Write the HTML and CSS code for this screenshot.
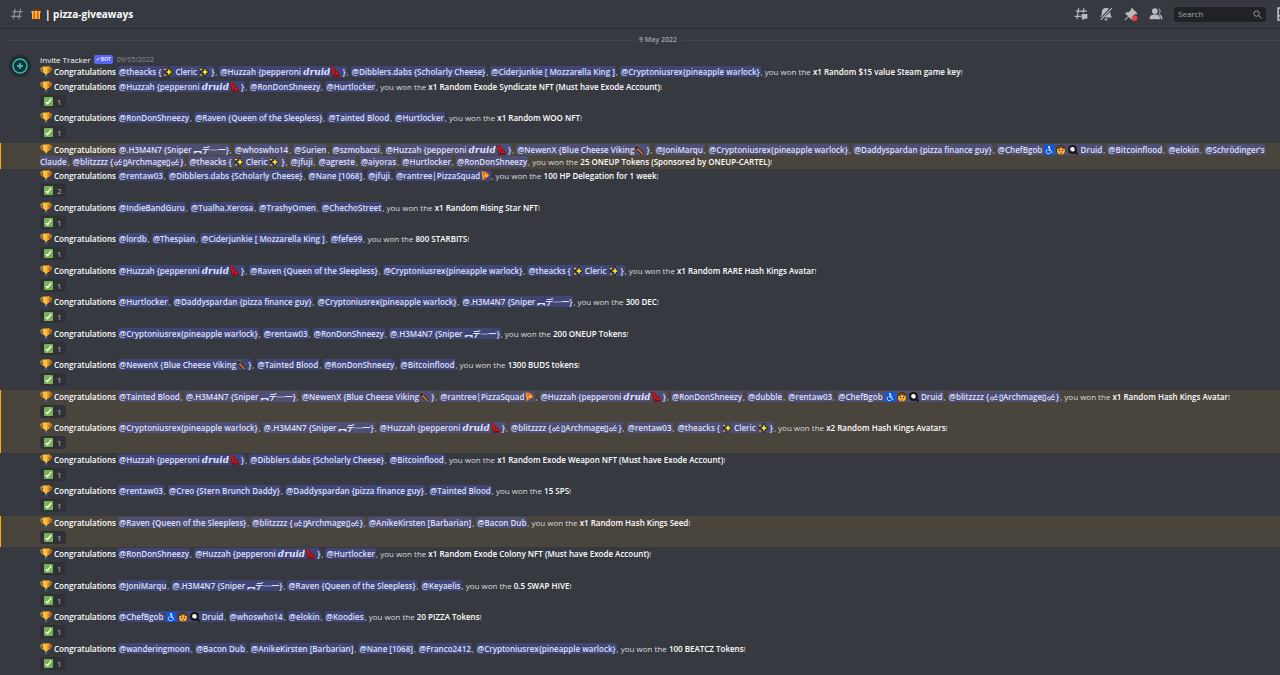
FILE: index.html
```html
<!DOCTYPE html>
<html lang="en">
<head>
    <meta charset="UTF-8">
    <title>pizza-giveaways</title>
    <link rel="stylesheet" href="styles.css">
</head>
<body>
    <svg class="sprite" aria-hidden="true">
        <symbol id="trophy" viewBox="0 0 24 24">
            <path d="M5 4H1.500c0 5 2 8.500 6 9M19 4h3.500c0 5-2 8.500-6 9" fill="none" stroke="#f4a51c" stroke-width="2"/>
            <path d="M5 1h14c0 8-1 13-5.500 15v3h-3v-3C6 14 5 9 5 1z" fill="#ffbe3b"/>
            <path d="M14 1h5c0 8-1 13-5.500 15C15 11 15 6 14 1z" fill="#f19020"/>
            <path d="M8 19h8v4H8z" fill="#36506b"/>
        </symbol>
        <symbol id="check" viewBox="0 0 20 20">
            <rect width="20" height="20" rx="2" fill="#77b255"/>
            <path d="M4 11l4 4 8-11" fill="none" stroke="#fff" stroke-width="3"/>
        </symbol>
        <symbol id="sparkles" viewBox="0 0 20 20">
            <path d="M12 2l2 6 5 2-5 2-2 6-2-6-5-2 5-2z" fill="#ffe92e" stroke="#15161c" stroke-width="3" paint-order="stroke"/>
            <path d="M4 1l1 3 3 1-3 1-1 3-1-3-3-1 3-1zM4 13l1 2 2 1-2 1-1 2-1-2-2-1 2-1z" fill="#ffd83b" stroke="#15161c" stroke-width="2" paint-order="stroke"/>
        </symbol>
        <symbol id="dancer" viewBox="0 0 20 20">
            <path d="M1 2l4-2 4 3 1 5 5 2 4 6-1 3-5 1-6-2-3-4 1-5-3-4z" fill="#d8141b" stroke="#2a1018" stroke-width="1"/>
            <path d="M6 17v3M11 11l-3 5M9 18l8-1" stroke="#46141b" stroke-width="2" fill="none"/>
        </symbol>
        <symbol id="axe" viewBox="0 0 20 20">
            <path d="M5 5l12 13" stroke="#23180f" stroke-width="6"/>
            <path d="M4 4l13 14" stroke="#ef8232" stroke-width="3"/>
            <path d="M1 7c0-3 3-6 7-6l1 4-4 4z" fill="#20222a" stroke="#c08a48" stroke-width="1"/>
        </symbol>
        <symbol id="pizza" viewBox="0 0 20 20">
            <path d="M3 1c8 0 14 4 15 9L5 19z" fill="#ffbd3f" stroke="#68311b" stroke-width="1"/>
            <path d="M3 2c8 0 13 4 15 8" fill="none" stroke="#d97b24" stroke-width="3"/>
            <circle cx="8" cy="7" r="2" fill="#de3320"/><circle cx="9" cy="13" r="2" fill="#de3320"/>
        </symbol>
        <symbol id="wheelchair" viewBox="0 0 20 20">
            <rect width="20" height="20" fill="#0b57e5"/>
            <circle cx="10" cy="4" r="2" fill="#fff"/>
            <path d="M10 6v5h4l2 5M10 8h4M7 9a4.500 4.500 0 1 0 6 6" fill="none" stroke="#fff" stroke-width="1.500"/>
        </symbol>
        <symbol id="man" viewBox="0 0 20 20">
            <circle cx="10" cy="10" r="9.500" fill="#2b1d14"/>
            <ellipse cx="10" cy="11" rx="8" ry="8" fill="#ffb732"/>
            <path d="M2 8c5 0 6-1 8-3 2 2 4 3 8 3-1-4-4-6-8-6S3 4 2 8z" fill="#70431d"/>
            <circle cx="7" cy="11" r="1.500" fill="#1c1c22"/><circle cx="13" cy="11" r="1.500" fill="#1c1c22"/>
            <path d="M8 16h4" stroke="#4c2d16" stroke-width="1.500"/>
        </symbol>
        <symbol id="pan" viewBox="0 0 20 20">
            <path d="M13 13l6 6" stroke="#15161b" stroke-width="4"/>
            <circle cx="9" cy="9" r="9" fill="#15161b"/>
            <path d="M5 6c2-3 7-2 8 1s0 7-4 6-6-4-4-7z" fill="#fff"/>
            <circle cx="9" cy="9" r="2" fill="#ffe9b0"/>
        </symbol>
        <symbol id="swirl" viewBox="0 0 20 20">
            <circle cx="6" cy="13" r="3" fill="none" stroke="#dee0fc" stroke-width="2"/>
            <path d="M8 15L15 4M12 10h6M11 15h6" fill="none" stroke="#dee0fc" stroke-width="2"/>
        </symbol>
    </svg>

    <header class="toolbar">
        <svg class="hash" viewBox="0 0 24 24"><path d="M9 3L6 21M18 3l-3 18M4 8h18M2 16h18" fill="none" stroke="#8e9297" stroke-width="2"/></svg>
        <svg class="gift" viewBox="0 0 20 20"><path d="M2 5h16v15H2z" fill="#fdb42f"/><path d="M1 4h18v4H1z" fill="#ffc83d"/><path d="M5 4h3v16H5zM12 4h3v16h-3z" fill="#e2572c"/><path d="M10 4C7 4 4 3 5 1s4 0 5 3c1-3 4-5 5-3s-2 3-5 3z" fill="#b53622"/></svg>
        <h1 class="channel-name">| pizza-giveaways</h1>
        <nav class="toolbar-actions">
            <button class="icon-btn" aria-label="Threads"><svg viewBox="0 0 24 24"><path d="M8 2L5 21M17 2l-1 8M3 7h19M1 16h11" fill="none" stroke="#b9bbbe" stroke-width="2"/><path d="M13 12h10v8h-5l-3 3v-3h-2z" fill="#b9bbbe"/></svg></button>
            <button class="icon-btn" aria-label="Notification settings"><svg viewBox="0 0 24 24"><path d="M17 3c-8-5-12 1-12 6 0 4-1 6-3 8h2zM20 8c-1 4 0 7 2 9v1H9zM9 20h6c-1 4-5 4-6 0z" fill="#b9bbbe"/><path d="M22 2L3 22" stroke="#b9bbbe" stroke-width="2"/></svg></button>
            <button class="icon-btn" aria-label="Pinned messages"><svg viewBox="0 0 24 24"><path d="M13 1l10 10-2 2-2-1-4 4v5l-2 1-5-5-6 6-1-1 6-6-5-5 2-2h4l5-5-1-2z" fill="#b9bbbe"/><circle cx="18" cy="19" r="5" fill="#ed4245"/></svg></button>
            <button class="icon-btn" aria-label="Member list"><svg viewBox="0 0 24 24"><circle cx="10" cy="7" r="5" fill="#b9bbbe"/><path d="M1 21c0-6 3-8 9-8s9 2 9 8zM16 2c5 1 5 8 1 10 4 1 6 4 6 9h-3c0-4-1-7-4-9 3-3 3-7 0-10z" fill="#b9bbbe"/></svg></button>
            <label class="search">
                <input type="text" placeholder="Search" aria-label="Search">
                <svg viewBox="0 0 20 20"><circle cx="8" cy="8" r="6" fill="none" stroke="#a3a6aa" stroke-width="2"/><path d="M12 12l7 7" stroke="#a3a6aa" stroke-width="2"/></svg>
            </label>
            <button class="icon-btn" aria-label="Inbox"><svg viewBox="0 0 24 24"><path d="M2 2h20v20H2zM2 15h6c1 4 7 4 8 0h6" fill="none" stroke="#b9bbbe" stroke-width="3"/></svg></button>
        </nav>
    </header>

    <main class="chat">
        <div class="divider"><span>9 May 2022</span></div>
        <div class="author">
            <svg class="avatar" viewBox="0 0 22 22"><circle cx="11" cy="11" r="11" fill="#262b30"/><circle cx="11" cy="11" r="7" fill="#14343a" stroke="#2fb9ab" stroke-width="1.500"/><path d="M11 8v6M8 11h6" stroke="#3fd0c0" stroke-width="1.500"/></svg>
            <span class="author-name">Invite Tracker</span>
            <span class="bot-tag">✓ BOT</span>
            <time class="date">09/05/2022</time>
        </div>
        <div id="messages"></div>
    </main>

    <script src="script.js"></script>
</body>
</html>
```
FILE: styles.css
```css
body {
    margin: 0;
    font-family: "Open Sans", "Noto Sans", sans-serif;
    font-size: 8px;
    line-height: 12px;
    color: #dcddde;
    background-color: #36393f;
    height: 100vh;
    overflow: hidden;
}
button, input {
    font: inherit;
    color: inherit;
    border: none;
    background: none;
    padding: 0;
}
.sprite {
    display: none;
}

/* Top bar */
.toolbar {
    display: flex;
    align-items: center;
    height: 28px;
    padding-left: 10px;
    margin-right: -11px;
    border-bottom: 1px solid #2b2d32;
}
.hash {
    width: 14px;
    height: 14px;
}
.gift {
    width: 10px;
    height: 10px;
    margin: 0 4px 0 7px;
}
.channel-name {
    margin: 0;
    font-size: 10px;
    line-height: 14px;
    color: #fff;
}
.toolbar-actions {
    display: flex;
    align-items: center;
    gap: 11px;
    margin-left: auto;
}
.icon-btn {
    width: 14px;
    height: 14px;
    cursor: pointer;
}
.icon-btn svg {
    display: block;
    width: 14px;
    height: 14px;
}
.search {
    display: flex;
    align-items: center;
    width: 84px;
    height: 15px;
    padding: 0 4px;
    border-radius: 2px;
    background-color: #202225;
}
.search input {
    flex: 1;
    min-width: 0;
    outline: none;
}
.search input::placeholder {
    color: #a3a6aa;
}
.search svg {
    width: 9px;
    height: 9px;
}

/* Messages */
.divider {
    display: flex;
    align-items: center;
    gap: 4px;
    margin: 5px -28px 8px 8px;
    font-size: 7px;
    font-weight: 600;
    color: #a3a6aa;
}
.divider::before, .divider::after {
    content: "";
    flex: 1;
    height: 1px;
    background-color: #42454b;
}
.author {
    position: relative;
    display: flex;
    align-items: center;
    height: 11px;
    padding-left: 40px;
}
.avatar {
    position: absolute;
    left: 9px;
    top: 1px;
    width: 22px;
    height: 22px;
}
.author-name {
    font-weight: 500;
    color: #fff;
}
.bot-tag {
    margin: 0 4px 0 3px;
    padding: 0 2px;
    border-radius: 2px;
    font-size: 5px;
    font-weight: 600;
    line-height: 9px;
    color: #fff;
    background-color: #5865f2;
}
.date {
    font-size: 7px;
    color: #8e9297;
}
.message {
    padding: 1px 8px 1px 39px;
    border-left: 1px solid transparent;
}
.message:nth-child(odd) {
    padding-bottom: 2px;
}
.message.mentioned {
    background-color: #49443c;
    border-left-color: #faa81a;
}
.message p {
    margin: 0;
}
.message strong {
    font-weight: 600;
    color: #fff;
}
.emoji {
    width: 10px;
    height: 10px;
    vertical-align: -2px;
}
.trophy {
    width: 12px;
    height: 12px;
    margin-right: 2px;
    vertical-align: -3px;
}
.mention {
    padding: 0 1px;
    border-radius: 2px;
    font-weight: 600;
    color: #dee0fc;
    text-decoration: none;
    background-color: rgba(88, 101, 242, 0.3);
}
.mention:hover {
    background-color: #5865f2;
}
.script {
    font-family: "DejaVu Serif", serif;
    font-size: 9px;
    font-weight: bold;
    font-style: italic;
    line-height: 1px;
}
.jp {
    font-family: "Noto Sans CJK JP", sans-serif;
    line-height: 1px;
}
.reaction {
    display: flex;
    align-items: center;
    gap: 4px;
    height: 13px;
    margin: 2px 0;
    padding: 0 4px;
    border-radius: 3px;
    color: #b9bbbe;
    background-color: #2f3136;
    cursor: pointer;
}
.reaction svg {
    width: 9px;
    height: 9px;
}
```
FILE: script.js
```javascript
const icon = (name, cls = 'emoji') => `<svg class="${cls}"><use href="#${name}"></use></svg>`;

// Names that are used many times in the list
const huzzah = `Huzzah {pepperoni <span class="script">druid</span>${icon('dancer')} }`;
const theacks = `theacks { ${icon('sparkles')} Cleric ${icon('sparkles')} }`;
const heman = '.H3M4N7 {Sniper <span class="jp">︻デ═一</span>}';
const newen = `NewenX {Blue Cheese Viking${icon('axe')} }`;
const rantree = `rantree|PizzaSquad${icon('pizza')}`;
const chef = `ChefBgob ${icon('wheelchair')} ${icon('man')} ${icon('pan')} Druid`;
const blitz = `blitzzzz {${icon('swirl')}▯Archmage▯${icon('swirl')}}`;
const crypto = 'Cryptoniusrex{pineapple warlock}';
const cider = 'Ciderjunkie [ Mozzarella King ]';
const raven = 'Raven {Queen of the Sleepless}';
const daddy = 'Daddyspardan {pizza finance guy}';
const dibblers = 'Dibblers.dabs {Scholarly Cheese}';
const anike = 'AnikeKirsten [Barbarian]';

const messages = [
    { users: [theacks, huzzah, dibblers, cider, crypto], prize: 'x1 Random $15 value Steam game key', votes: 0 },
    { users: [huzzah, 'RonDonShneezy', 'Hurtlocker'], prize: 'x1 Random Exode Syndicate NFT (Must have Exode Account)', votes: 1 },
    { users: ['RonDonShneezy', raven, 'Tainted Blood', 'Hurtlocker'], prize: 'x1 Random WOO NFT', votes: 1 },
    { users: [heman, 'whoswho14', 'Surien', 'szmobacsi', huzzah, newen, 'JoniMarqu', crypto, daddy, chef, 'Bitcoinflood', 'elokin', 'Schrödinger’s Claude', blitz, theacks, 'jfuji', 'agreste', 'aiyoras', 'Hurtlocker', 'RonDonShneezy'], prize: '25 ONEUP Tokens (Sponsored by ONEUP-CARTEL)', votes: 0, mentioned: true },
    { users: ['rentaw03', dibblers, 'Nane [1068]', 'jfuji', rantree], prize: '100 HP Delegation for 1 week', votes: 2 },
    { users: ['IndieBandGuru', 'Tualha.Xerosa', 'TrashyOmen', 'ChechoStreet'], prize: 'x1 Random Rising Star NFT', votes: 1 },
    { users: ['lordb', 'Thespian', cider, 'fefe99'], prize: '800 STARBITS', votes: 1 },
    { users: [huzzah, raven, crypto, theacks], prize: 'x1 Random RARE Hash Kings Avatar', votes: 1 },
    { users: ['Hurtlocker', daddy, crypto, heman], prize: '300 DEC', votes: 1 },
    { users: [crypto, 'rentaw03', 'RonDonShneezy', heman], prize: '200 ONEUP Tokens', votes: 1 },
    { users: [newen, 'Tainted Blood', 'RonDonShneezy', 'Bitcoinflood'], prize: '1300 BUDS tokens', votes: 1 },
    { users: ['Tainted Blood', heman, newen, rantree, huzzah, 'RonDonShneezy', 'dubble', 'rentaw03', chef, blitz], prize: 'x1 Random Hash Kings Avatar', votes: 1, mentioned: true },
    { users: [crypto, heman, huzzah, blitz, 'rentaw03', theacks], prize: 'x2 Random Hash Kings Avatars', votes: 1, mentioned: true },
    { users: [huzzah, dibblers, 'Bitcoinflood'], prize: 'x1 Random Exode Weapon NFT (Must have Exode Account)', votes: 1 },
    { users: ['rentaw03', 'Creo {Stern Brunch Daddy}', daddy, 'Tainted Blood'], prize: '15 SPS', votes: 1 },
    { users: [raven, blitz, anike, 'Bacon Dub'], prize: 'x1 Random Hash Kings Seed', votes: 1, mentioned: true },
    { users: ['RonDonShneezy', huzzah, 'Hurtlocker'], prize: 'x1 Random Exode Colony NFT (Must have Exode Account)', votes: 1 },
    { users: ['JoniMarqu', heman, raven, 'Keyaelis'], prize: '0.5 SWAP HIVE', votes: 1 },
    { users: [chef, 'whoswho14', 'elokin', 'Koodies'], prize: '20 PIZZA Tokens', votes: 1 },
    { users: ['wanderingmoon', 'Bacon Dub', anike, 'Nane [1068]', 'Franco2412', crypto], prize: '100 BEATCZ Tokens', votes: 1 }
];

const list = document.getElementById('messages');
messages.forEach(msg => {
    const item = document.createElement('article');
    item.className = msg.mentioned ? 'message mentioned' : 'message';
    const users = msg.users.map(user => `<a class="mention" href="#">@${user}</a>`).join(', ');
    item.innerHTML = `
        <p>${icon('trophy', 'trophy')}<strong>Congratulations</strong> ${users}, you won the <strong>${msg.prize}</strong>!</p>
        ${msg.votes ? `<button class="reaction">${icon('check')}${msg.votes}</button>` : ''}
    `;
    list.appendChild(item);
});
```
